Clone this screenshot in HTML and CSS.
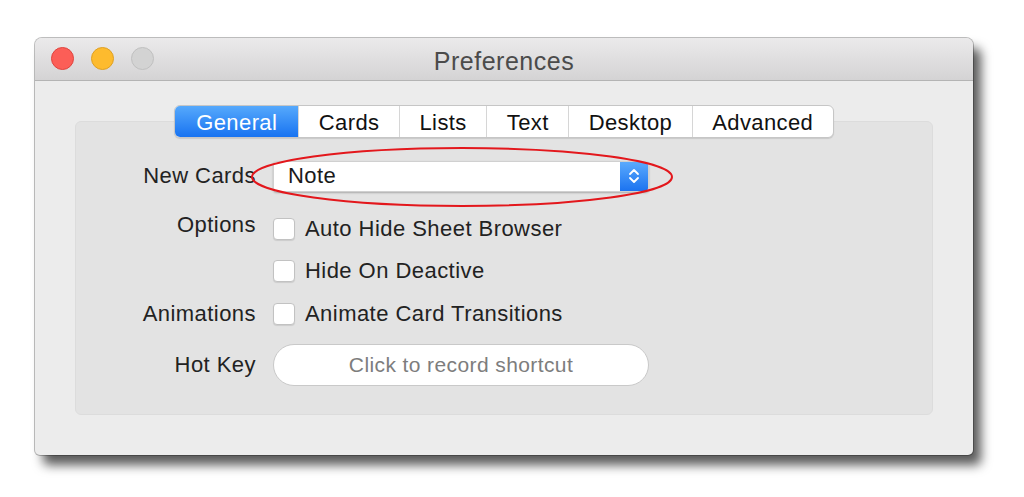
FILE: index.html
```html
<!DOCTYPE html>
<html>
<head>
<meta charset="utf-8">
<link rel="stylesheet" href="styles.css">
</head>
<body>
<div class="window">
  <div class="titlebar">
    <div class="lights">
      <span class="light red"></span>
      <span class="light yellow"></span>
      <span class="light gray"></span>
    </div>
    <div class="title">Preferences</div>
    <div></div>
  </div>
  <div class="content">
    <div class="tabs">
      <div class="tab active">General</div>
      <div class="tab">Cards</div>
      <div class="tab">Lists</div>
      <div class="tab">Text</div>
      <div class="tab">Desktop</div>
      <div class="tab">Advanced</div>
    </div>
    <div class="group">
      <div class="row row-popup">
        <div class="label">New Cards</div>
        <div class="popup">
          <span class="popup-value">Note</span>
          <span class="popup-arrows">
            <svg width="14" height="20" viewBox="0 0 14 20"><path d="M3 8 L7 4 L11 8 M3 12 L7 16 L11 12" fill="none" stroke="#fff" stroke-width="1.8" stroke-linecap="round" stroke-linejoin="round"/></svg>
          </span>
        </div>
      </div>
      <div class="row row-check first">
        <div class="label label-high">Options</div>
        <span class="checkbox"></span><span class="check-text">Auto Hide Sheet Browser</span>
      </div>
      <div class="row row-check second">
        <div class="label"></div>
        <span class="checkbox"></span><span class="check-text">Hide On Deactive</span>
      </div>
      <div class="row row-check third">
        <div class="label">Animations</div>
        <span class="checkbox"></span><span class="check-text">Animate Card Transitions</span>
      </div>
      <div class="row row-hotkey">
        <div class="label">Hot Key</div>
        <div class="shortcut">Click to record shortcut</div>
      </div>
      <svg class="annotation" width="436" height="64" viewBox="0 0 436 64"><ellipse cx="216" cy="31" rx="210" ry="29" fill="none" stroke="#e3171c" stroke-width="2"/></svg>
    </div>
  </div>
</div>
</body>
</html>
```
FILE: styles.css
```css
* { box-sizing: border-box; }
body {
  margin: 0;
  background: #ffffff;
  font-family: "Liberation Sans", Arial, sans-serif;
  width: 1024px;
  height: 497px;
  overflow: hidden;
}
.window {
  width: 938px;
  height: 417px;
  margin: 38px 0 0 35px;
  border-radius: 7px 7px 5px 5px;
  background: #ececec;
  box-shadow: 8px 10px 11px rgba(0,0,0,0.65), 0 0 0 1px rgba(0,0,0,0.25);
  overflow: hidden;
  display: flex;
  flex-direction: column;
}
.titlebar {
  height: 43px;
  flex: none;
  display: grid;
  grid-template-columns: 1fr auto 1fr;
  align-items: center;
  background: linear-gradient(#ebeaeb, #d4d3d4);
  border-bottom: 1px solid #b4b4b4;
}
.lights {
  display: flex;
  gap: 17px;
  padding-left: 16px;
  padding-bottom: 1px;
}
.light {
  width: 23px;
  height: 23px;
  border-radius: 50%;
  display: block;
}
.red { background: #fc5e57; border: 1px solid #e0443e; }
.yellow { background: #fdbb2e; border: 1px solid #dfa023; }
.gray { background: #d3d3d3; border: 1px solid #c0c0c0; }
.title {
  font-size: 25px;
  letter-spacing: 0.5px;
  color: #4b4b4b;
  padding-top: 4px;
}
.content {
  flex: 1;
  padding: 24px 40px 40px;
  display: flex;
  flex-direction: column;
}
.tabs {
  align-self: center;
  display: flex;
  height: 33px;
  background: #fff;
  border: 1px solid #c6c6c6;
  border-radius: 6px;
  box-shadow: 0 1px 1px rgba(0,0,0,0.12);
  position: relative;
  z-index: 1;
  overflow: hidden;
}
.tab {
  display: flex;
  align-items: center;
  justify-content: center;
  padding: 3px 19.5px 0;
  font-size: 22px;
  letter-spacing: 0.4px;
  color: #111;
  border-left: 1px solid #d6d6d6;
}
.tab:first-child { border-left: none; }
.tab.active {
  background: linear-gradient(#56a9fc, #1873f1);
  color: #fff;
  padding: 3px 21px 0;
}
.group {
  position: relative;
  margin-top: -17px;
  flex: 1;
  background: #e3e3e3;
  border: 1px solid #dcdcdc;
  border-radius: 6px;
  padding-top: 36px;
}
.row {
  display: flex;
  align-items: center;
  font-size: 22px;
  letter-spacing: 0.45px;
  color: #222;
}
.label {
  width: 180px;
  text-align: right;
  margin-right: 17px;
  flex: none;
}
.row-popup { height: 36px; }
.popup {
  width: 376px;
  height: 31px;
  background: #fff;
  border: 1px solid #d0d0d0;
  border-radius: 4px;
  box-shadow: 0 1px 2px rgba(0,0,0,0.25);
  display: flex;
  align-items: center;
  overflow: hidden;
}
.popup-value {
  flex: 1;
  padding-left: 14px;
  color: #1a1a1a;
}
.popup-arrows {
  width: 28px;
  height: 100%;
  background: linear-gradient(#5aaafd, #1b73f0);
  display: flex;
  align-items: center;
  justify-content: center;
}
.row-check { height: 36px; }
.row-check.first { margin-top: 17px; }
.row-check.second { margin-top: 6px; }
.row-check.third { margin-top: 7px; }
.label-high { align-self: flex-start; padding-top: 1px; }
.checkbox {
  width: 22px;
  height: 22px;
  background: #fff;
  border: 1px solid #c2c2c2;
  border-radius: 4px;
  box-shadow: 0 1px 1px rgba(0,0,0,0.1);
  margin-right: 10px;
  flex: none;
}
.check-text { color: #222; }
.row-hotkey { height: 42px; margin-top: 12px; }
.shortcut {
  width: 376px;
  height: 42px;
  border-radius: 21px;
  background: #fff;
  border: 1px solid #c9c9c9;
  display: flex;
  align-items: center;
  justify-content: center;
  color: #7d7d7d;
  font-size: 21px;
  letter-spacing: 0.4px;
}
.annotation {
  position: absolute;
  left: 170px;
  top: 24px;
}
```
